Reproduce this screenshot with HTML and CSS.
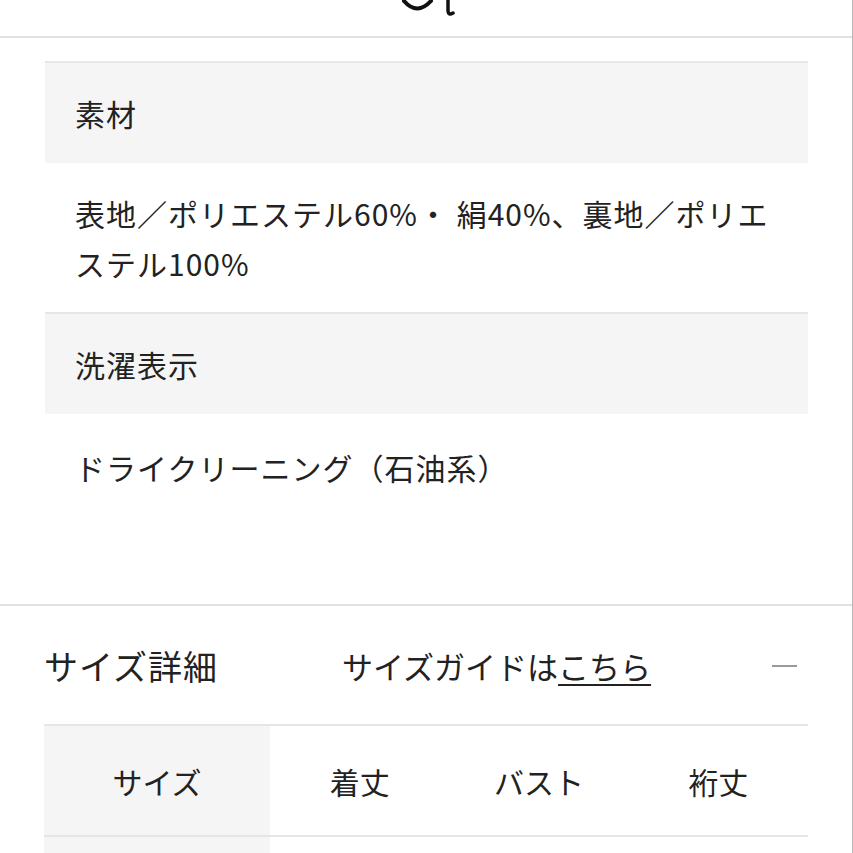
FILE: index.html
```html
<!DOCTYPE html>
<html lang="ja">
<head>
<meta charset="utf-8">
<title>商品詳細</title>
<link rel="stylesheet" href="styles.css">
</head>
<body>
<div class="page">
  <header class="topbar">
    <svg class="logo-frag" width="853" height="36" viewBox="0 0 853 36" aria-hidden="true">
      <path d="M404 1 Q417 16 431 1" fill="none" stroke="#111" stroke-width="4" stroke-linecap="round"/>
      <path d="M448 0 L448 10 Q448 16 453 13" fill="none" stroke="#111" stroke-width="3.5" stroke-linecap="round"/>
    </svg>
  </header>

  <section class="spec">
    <div class="spec-row spec-label">素材</div>
    <div class="spec-row spec-value">表地／ポリエステル60%・ 絹40%、裏地／ポリエステル100%</div>
    <div class="spec-row spec-label bordered">洗濯表示</div>
    <div class="spec-row spec-value last">ドライクリーニング（石油系）</div>
  </section>

  <section class="size">
    <div class="size-head">
      <h2 class="size-title">サイズ詳細</h2>
      <div class="size-guide">サイズガイドは<a class="guide-link" href="#">こちら</a></div>
      <span class="minus"></span>
    </div>
    <div class="size-table">
      <div class="cell first">サイズ</div>
      <div class="cell">着丈</div>
      <div class="cell">バスト</div>
      <div class="cell">裄丈</div>
      <div class="cell first body"></div>
      <div class="cell body"></div>
      <div class="cell body"></div>
      <div class="cell body"></div>
    </div>
  </section>
</div>
</body>
</html>
```

FILE: styles.css
```css
* {
  box-sizing: border-box;
}

html, body {
  margin: 0;
  padding: 0;
  background: #fff;
}

body {
  font-family: "Noto Sans CJK JP", "Noto Sans", sans-serif;
  color: #222;
  overflow: hidden;
}

.page {
  width: 853px;
  height: 853px;
  border-right: 1px solid #b8b8b8;
  overflow: hidden;
}

.topbar {
  height: 38px;
  border-bottom: 2px solid #e2e2e2;
}

.logo-frag {
  display: block;
}

.spec {
  margin: 23px 44px 0 45px;
  padding-bottom: 112px;
}

.spec-row {
  font-size: 30px;
  line-height: 50px;
  letter-spacing: 1px;
  padding: 25px 31px 25px 30px;
}

.spec-label {
  background: #f5f5f5;
  border-top: 2px solid #e6e6e6;
}

.spec-value {
  padding-top: 25px;
  padding-bottom: 24px;
}

.spec-value.last {
  padding-top: 28px;
  padding-bottom: 0;
}

.size {
  border-top: 2px solid #e2e2e2;
}

.size-head {
  display: flex;
  align-items: center;
  margin: 0 44px 0 44px;
  padding: 35px 11px 33px 0;
}

.size-title {
  margin: 0;
  width: 298px;
  font-size: 34px;
  font-weight: 400;
  line-height: 50px;
  letter-spacing: 1px;
  color: #222;
}

.size-guide {
  font-size: 31px;
  line-height: 50px;
  color: #222;
}

.guide-link {
  color: #222;
  text-decoration: underline;
  text-decoration-thickness: 2px;
  text-underline-offset: 5px;
}

.minus {
  margin-left: auto;
  width: 25px;
  height: 2px;
  background: #9a9a9a;
}

.size-table {
  margin: 0 44px;
  display: grid;
  grid-template-columns: 226px repeat(3, 1fr);
  border-top: 2px solid #e6e6e6;
}

.cell {
  height: 111px;
  display: flex;
  align-items: center;
  justify-content: center;
  font-size: 30px;
  border-bottom: 2px solid #e6e6e6;
}

.cell.first {
  background: #f5f5f5;
}

.cell.body {
  border-bottom: none;
}
```
